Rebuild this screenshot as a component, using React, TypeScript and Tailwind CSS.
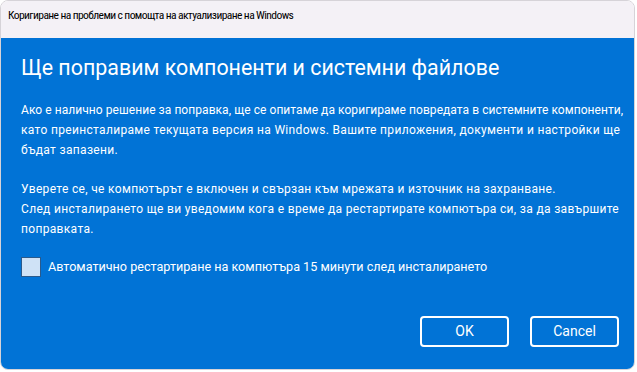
import { useState } from "react";

function App() {
   const [restart, setRestart] = useState(false)

   return (
      <div className="w-[637px] h-[372px] bg-white font-['Roboto',sans-serif]">
         <div className="w-[635px] h-[370px] flex flex-col border border-[#d6d3d8] rounded-[8px] overflow-hidden">
            <div className="h-[37px] shrink-0 bg-[#f4f1f6] pt-[6px] pl-[7px] text-[11.6px] leading-[16px] tracking-[-0.62px] text-black font-['Roboto_Condensed','Roboto',sans-serif] whitespace-nowrap">
               Коригиране на проблеми с помощта на актуализиране на Windows
            </div>

            <div className="flex-1 bg-[#0173d6] text-white flex flex-col pl-[20px] pr-[15px]">
               <h1 className="mt-[16px] text-[21.4px] leading-[28px] whitespace-nowrap">Ще поправим компоненти и системни файлове</h1>

               <p className="mt-[18px] text-[12px] leading-[20px] tracking-[0.33px] whitespace-nowrap">
                  <span className="tracking-[0.06px]">Ако е налично решение за поправка, ще се опитаме да коригираме повредата в системните компоненти,</span>
                  <br />
                  като преинсталираме текущата версия на Windows. Вашите приложения, документи и настройки ще
                  <br />
                  бъдат запазени.
               </p>

               <p className="mt-[19px] text-[12px] leading-[20px] tracking-[0.33px] whitespace-nowrap">
                  Уверете се, че компютърът е включен и свързан към мрежата и източник на захранване.
                  <br />
                  След инсталирането ще ви уведомим кога е време да рестартирате компютъра си, за да завършите
                  <br />
                  поправката.
               </p>

               <label className="mt-[18px] h-[20px] flex items-center gap-[7px] text-[12.6px] whitespace-nowrap cursor-pointer">
                  <input
                     type="checkbox"
                     checked={restart}
                     onChange={() => setRestart(!restart)}
                     className="appearance-none shrink-0 w-[20px] h-[20px] bg-[#cfe2f6] border border-[#2a5a8c] checked:bg-white"
                  />
                  Автоматично рестартиране на компютъра 15 минути след инсталирането
               </label>

               <div className="mt-auto mb-[22px] flex justify-end gap-[21px]">
                  <button className="w-[89px] h-[31px] border-2 border-white rounded-[4px] text-[14px]">OK</button>
                  <button className="w-[89px] h-[31px] border-2 border-white rounded-[4px] text-[14px]">Cancel</button>
               </div>
            </div>
         </div>
      </div>
   )
}

export default App;
